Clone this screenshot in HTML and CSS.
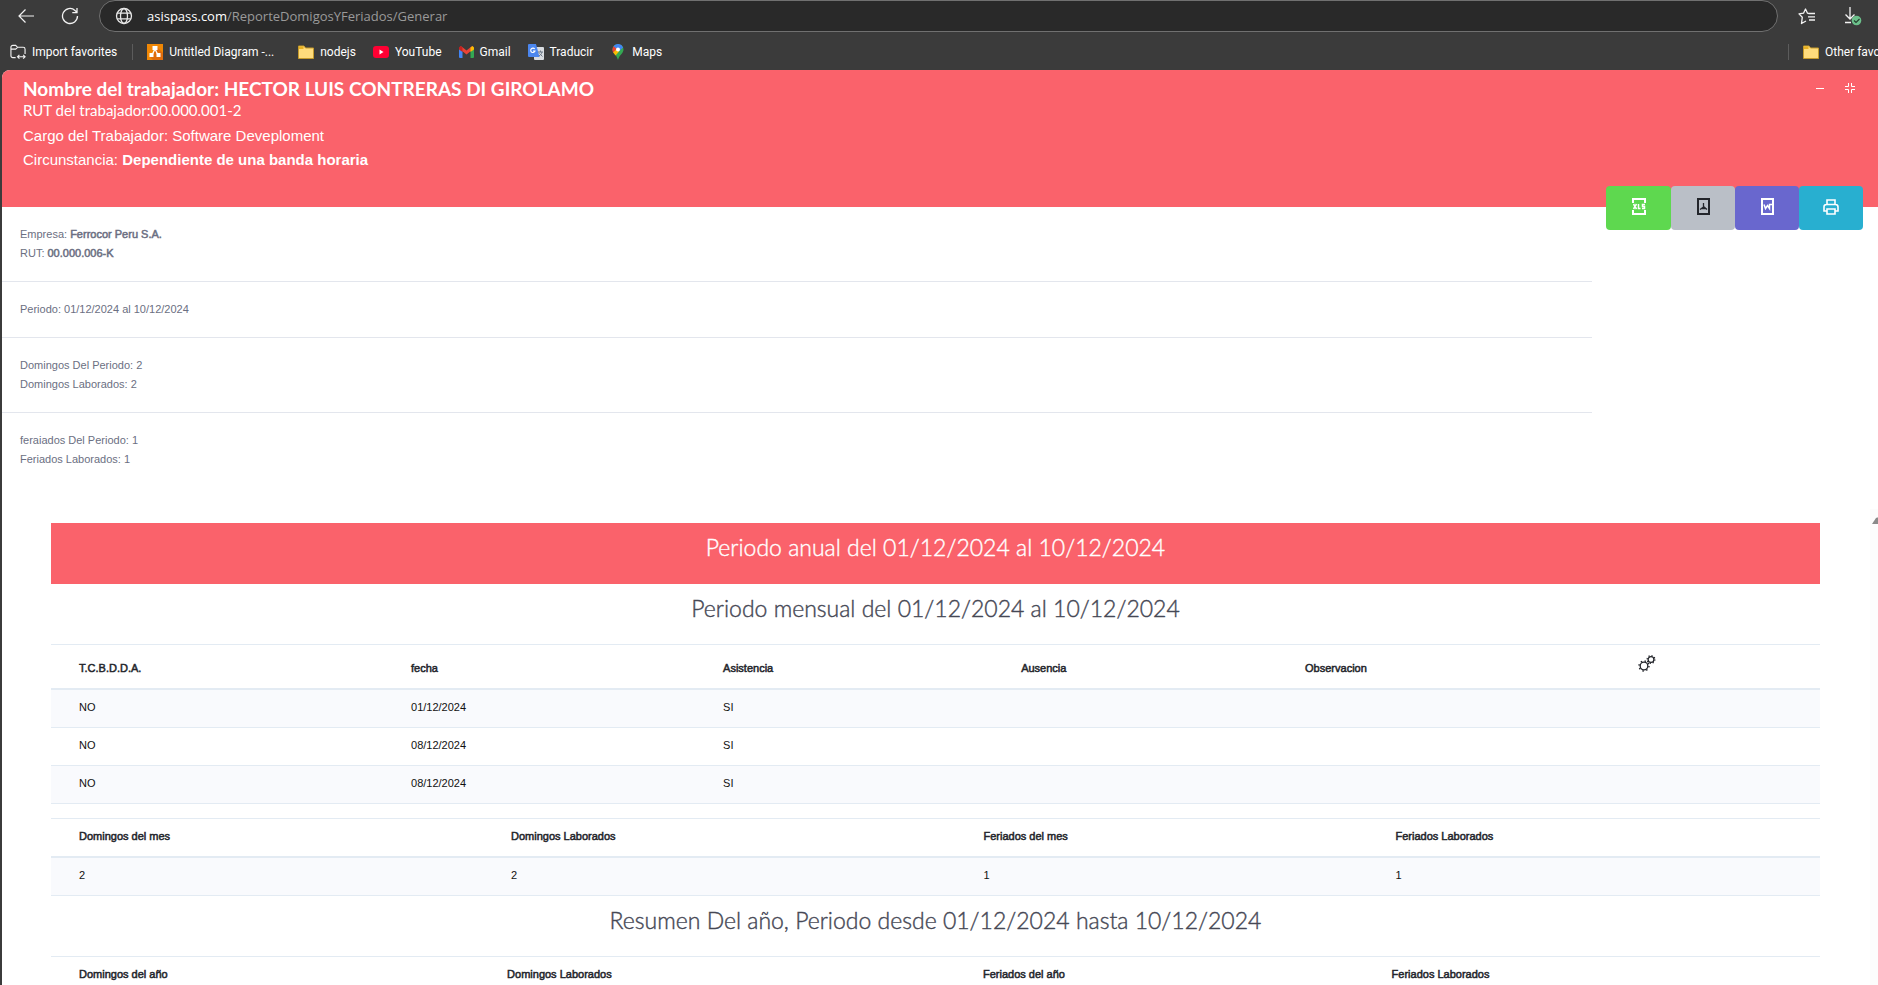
FILE: index.html
```html
<!DOCTYPE html>
<html lang="es">
<head>
<meta charset="utf-8">
<title>Reporte Domingos y Feriados</title>
<link rel="stylesheet" href="styles.css">
</head>
<body>
<div class="browser">
  <div class="toolbar">
    <button class="nav-btn" aria-label="Atrás"><svg width="18" height="16" viewBox="0 0 18 16"><path d="M17 8H2M8.500 1.500 2 8l6.500 6.500" fill="none" stroke="#f2f2f2" stroke-width="1.200"/></svg></button>
    <button class="nav-btn" aria-label="Recargar"><svg width="18" height="18" viewBox="0 0 18 18"><path d="M16.500 9A7.500 7.500 0 1 1 14 3.400L16 5.500M16 1v4.700h-4.700" fill="none" stroke="#f2f2f2" stroke-width="1.300"/></svg></button>
    <div class="address">
      <svg width="18" height="18" viewBox="0 0 18 18" fill="none" stroke="#e8e8e8" stroke-width="1.300"><circle cx="9" cy="9" r="7.500"/><ellipse cx="9" cy="9" rx="3.500" ry="7.500"/><path d="M2.200 6.200h13.600M2.200 11.800h13.600"/></svg>
      <span class="url"><span class="host">asispass.com</span>/ReporteDomigosYFeriados/Generar</span>
    </div>
    <div class="tools">
      <button class="nav-btn" aria-label="Favoritos"><svg width="18" height="17" viewBox="0 0 18 17" fill="none" stroke="#f2f2f2" stroke-width="1.300" stroke-linejoin="round"><path d="M11 5.500 9.500 5.200 7.500 1 5.500 5.200 1 5.900 4.300 9.200 3.500 15.500 8 13"/><path d="M11 5.500h6M10 8.800h7M11 12h6"/></svg></button>
      <button class="nav-btn" aria-label="Descargas"><svg width="18" height="20" viewBox="0 0 18 20"><path d="M6 1v12M1.500 8.500 6 13l4.500-4.500M1 16.500h6" fill="none" stroke="#f2f2f2" stroke-width="1.300"/><circle cx="12.500" cy="14.500" r="4.800" fill="#6cc08b"/><path d="m10 14.500 2 2 3.500-3.500" fill="none" stroke="#26402f" stroke-width="1.200"/></svg></button>
    </div>
  </div>
  <nav class="bookmarks">
    <a class="bm bm-import" href="#"><svg width="16" height="16" viewBox="0 0 17 16" fill="none" stroke="#f2f2f2" stroke-width="1.200"><path d="M6 14H3a2 2 0 0 1-2-2V3a2 2 0 0 1 2-2h3l2 2h6a2 2 0 0 1 2 2v5M1 5h5l2-2"/><path d="M8 13h8M10 11l-2 2 2 2M14 11l2 2-2 2"/></svg>Import favorites</a>
    <span class="sep"></span>
    <a class="bm bm-diagram" href="#"><svg width="16" height="16" viewBox="0 0 16 16"><path fill="#f08705" d="M0 0h16v16H0z"/><path fill="#df6c0c" d="m10 3 6 6v7H6l-3-3z"/><path d="M8 5 5 11M8 5l3 6" stroke="#fff" stroke-width="1.300"/><path fill="#fff" d="M5.500 2h5v4h-5zM2.500 9h4v4h-4zM9.500 9h4v4h-4z"/></svg>Untitled Diagram -...</a>
    <a class="bm" href="#"><svg width="16" height="14" viewBox="0 0 16 14"><path d="M.5 1h5.500l1.500 2h8v10.500H.5z" fill="#ffdc7c" stroke="#c59a2b"/><path d="M1 1.500h4.500v2.500H1z" fill="#e8b020"/></svg>nodejs</a>
    <a class="bm" href="#"><svg width="16" height="12" viewBox="0 0 16 12"><rect width="16" height="12" rx="3" fill="#f03"/><path d="m6.500 3.500 4 2.500-4 2.500z" fill="#fff"/></svg>YouTube</a>
    <a class="bm" href="#"><svg width="15" height="12" viewBox="0 0 15 12"><path fill="#4285f4" d="M0 2h3.500v10H1a1 1 0 0 1-1-1z"/><path fill="#34a853" d="M11.500 2H15v9a1 1 0 0 1-1 1h-2.500z"/><path fill="#ea4335" d="M1 .5h1.500l5 4 5-4H14v2.800L7.500 8.500 1 3.300z"/><path fill="#fbbc04" d="M11.500 1.500 13.500 0 15 1.500V3.500l-3.500 2.500z"/><path fill="#c5221f" d="M0 3.500v-2L1.500 0l2 1.500v4.500z"/></svg>Gmail</a>
    <a class="bm" href="#"><svg width="16" height="16" viewBox="0 0 16 16"><rect x="6" y="3" width="10" height="13" rx="1" fill="#d9dce0"/><path d="M1 0h7l3.500 13H1a1 1 0 0 1-1-1V1a1 1 0 0 1 1-1z" fill="#4b86ee"/><path d="M6.700 5A2.200 2.200 0 1 0 7 7H5" fill="none" stroke="#fff" stroke-width="1.100"/><path d="M10 8h5M12.500 6.500V8M14 8c-.5 2-1.500 3-3 4M11.500 9.500l3 3" fill="none" stroke="#6b7785"/></svg>Traducir</a>
    <a class="bm" href="#"><svg width="16" height="16" viewBox="0 0 16 16"><path d="M8 0a5.500 5.500 0 0 1 5.500 5.500C13.500 9.500 9.500 10.500 8 16c-1.500-5.500-5.500-6.500-5.500-10.500A5.500 5.500 0 0 1 8 0z" fill="#34a853"/><path d="M3.500 2.300A5.500 5.500 0 0 1 13.100 3.500L8 8z" fill="#4285f4"/><path d="M3.600 2.200 7 5 3.500 9a6 6 0 0 1 .1-6.800z" fill="#ea4335"/><path d="M3.200 8.500 7 4.500 9 7.500 5.600 11.500z" fill="#fbbc04"/><circle cx="8" cy="5.500" r="2" fill="#fff"/></svg>Maps</a>
    <span class="sep sep-end"></span>
    <a class="bm bm-other" href="#"><svg width="16" height="14" viewBox="0 0 16 14"><path d="M.5 1h5.500l1.500 2h8v10.500H.5z" fill="#ffdc7c" stroke="#c59a2b"/><path d="M1 1.500h4.500v2.500H1z" fill="#e8b020"/></svg>Other favorites</a>
  </nav>
</div>

<main class="page">
  <header class="card-head">
    <div class="worker">
      <h1>Nombre del trabajador: HECTOR LUIS CONTRERAS DI GIROLAMO</h1>
      <h2>RUT del trabajador:00.000.001-2</h2>
      <p>Cargo del Trabajador: Software Deveploment</p>
      <p>Circunstancia: <b>Dependiente de una banda horaria</b></p>
    </div>
    <div class="card-tools">
      <button aria-label="Minimizar"><svg width="10" height="10" viewBox="0 0 10 10"><path d="M1 5.500h8" stroke="#fff"/></svg></button>
      <button aria-label="Contraer"><svg width="10" height="10" viewBox="0 0 10 10"><path d="M0 3.500h3.500V0M6.500 0v3.500H10M0 6.500h3.500V10M6.500 10V6.500H10" fill="none" stroke="#fff"/></svg></button>
    </div>
  </header>

  <div class="summary">
    <div class="info">
      <section><p>Empresa: <b>Ferrocor Peru S.A.</b></p><p>RUT: <b>00.000.006-K</b></p></section>
      <section><p>Periodo: 01/12/2024 al 10/12/2024</p></section>
      <section><p>Domingos Del Periodo: 2</p><p>Domingos Laborados: 2</p></section>
      <section><p>feraiados Del Periodo: 1</p><p>Feriados Laborados: 1</p></section>
    </div>
    <div class="exports">
      <button class="xls" aria-label="Excel"><svg width="14" height="17" viewBox="0 0 14 17"><path d="M1 5V1h12v4M1 12v4h12v-4" fill="none" stroke="#fff" stroke-width="2"/><path d="m1.500 6 3 5M4.500 6l-3 5M6.500 6v4.500h2M13 6.500h-2.500v2h2v2H10" fill="none" stroke="#fff" stroke-width="1.500"/></svg></button>
      <button class="pdf" aria-label="PDF"><svg width="13" height="17" viewBox="0 0 13 17"><path d="M1 1h11v15H1z" fill="none" stroke="#23252b" stroke-width="2"/><path d="M6.500 5v4L3 11.500M6.500 8.500 10 11.500M4.500 10.500H9" fill="none" stroke="#23252b" stroke-width="1.300"/></svg></button>
      <button class="doc" aria-label="Word"><svg width="13" height="17" viewBox="0 0 13 17"><path d="M1 1h11v15H1z" fill="none" stroke="#fff" stroke-width="2"/><path d="M3 6.500 4.500 10.500 6.500 7.500 8.500 10.500V6.500H11" fill="none" stroke="#fff" stroke-width="1.500"/></svg></button>
      <button class="print" aria-label="Imprimir"><svg width="16" height="16" viewBox="0 0 16 16" fill="none" stroke="#fff" stroke-width="1.600"><path d="M4 5V1h8v4M4 12H1V8a2.500 2.500 0 0 1 2.500-2.500h9A2.500 2.500 0 0 1 15 8v4h-3M4 10h8v5H4z"/></svg></button>
    </div>
  </div>

  <div class="report">
    <h3 class="banner">Periodo anual del 01/12/2024 al 10/12/2024</h3>
    <h3 class="title">Periodo mensual del 01/12/2024 al 10/12/2024</h3>
    <table class="days">
      <colgroup><col class="d1"><col class="d2"><col class="d3"><col class="d4"><col class="d5"><col></colgroup>
      <thead><tr><th>T.C.B.D.D.A.</th><th>fecha</th><th>Asistencia</th><th>Ausencia</th><th>Observacion</th><th class="gear"><svg width="18" height="17" viewBox="0 0 18 17" fill="none" stroke="#23252b"><circle cx="6" cy="11" r="3.800" stroke-width="1.300"/><circle cx="6" cy="11" r="5" stroke-width="1.400" stroke-dasharray="1.400 2.527"/><circle cx="13" cy="4.500" r="2.900" stroke-width="1.300"/><circle cx="13" cy="4.500" r="3.900" stroke-width="1.200" stroke-dasharray="1.200 1.863"/></svg></th></tr></thead>
      <tbody>
        <tr><td>NO</td><td>01/12/2024</td><td>SI</td><td></td><td></td><td></td></tr>
        <tr><td>NO</td><td>08/12/2024</td><td>SI</td><td></td><td></td><td></td></tr>
        <tr><td>NO</td><td>08/12/2024</td><td>SI</td><td></td><td></td><td></td></tr>
      </tbody>
    </table>
    <table class="month">
      <colgroup><col class="m1"><col class="m2"><col class="m3"><col></colgroup>
      <thead><tr><th>Domingos del mes</th><th>Domingos Laborados</th><th>Feriados del mes</th><th>Feriados Laborados</th></tr></thead>
      <tbody><tr><td>2</td><td>2</td><td>1</td><td>1</td></tr></tbody>
    </table>
    <h3 class="title">Resumen Del año, Periodo desde 01/12/2024 hasta 10/12/2024</h3>
    <table class="year">
      <colgroup><col class="y1"><col class="y2"><col class="y3"><col></colgroup>
      <thead><tr><th>Domingos del año</th><th>Domingos Laborados</th><th>Feriados del año</th><th>Feriados Laborados</th></tr></thead>
    </table>
  </div>
  <div class="scroll"><svg width="12" height="7" viewBox="0 0 12 7"><path d="M0 7 4 1q1-1 3 0l5 6z" fill="#8a8a8a"/></svg></div>
</main>
</body>
</html>
```
FILE: styles.css
```css
* { box-sizing: border-box; }
body {
  margin: 0;
  height: 100vh;
  overflow: hidden;
  background: #3b3b3b;
  font-family: "Liberation Sans", Arial, sans-serif;
  font-size: 11px;
}
h1, h2, h3, p { margin: 0; }
button { padding: 0; border: 0; background: none; }
svg { display: block; flex: none; }

.browser { color: #fff; }
.toolbar { display: flex; align-items: center; height: 32px; padding-left: 17px; }
.nav-btn { display: flex; flex: none; margin-right: 26px; }
.nav-btn + .nav-btn { margin-right: 20px; }
.address {
  flex: 1;
  display: flex;
  align-items: center;
  gap: 14px;
  height: 32px;
  padding-left: 15px;
  border: 1px solid #707070;
  border-radius: 16px;
  background: #292929;
}
.url { font: 13px "Open Sans", "Noto Sans", sans-serif; color: #9a9a9a; }
.host { color: #fff; }
.tools { display: flex; align-items: center; padding-left: 20px; margin-right: -12px; }
.tools .nav-btn { margin-right: 28px; }
.bookmarks { display: flex; align-items: center; height: 38px; padding: 2px 0 0 10px; overflow: hidden; }
.bm {
  display: flex;
  align-items: center;
  flex: none;
  gap: 6px;
  margin-right: 17px;
  font: 12px Roboto, "Open Sans", sans-serif;
  color: #fff;
  text-decoration: none;
  white-space: nowrap;
}
.bm-diagram { margin-right: 24px; }
.sep { flex: none; width: 1px; height: 16px; margin-right: 14px; background: #5c5c5c; }
.bm-import + .sep { margin-left: -2px; }
.sep-end { margin-left: auto; }
.bm-other { width: 75px; margin-right: 0; }

.page { position: relative; height: calc(100vh - 70px); margin-left: 2px; overflow: hidden; background: #fff; border-top-left-radius: 8px; }
.card-head {
  display: flex;
  justify-content: space-between;
  min-height: 137px;
  padding: 8px 23px 0 21px;
  background: #fa626b;
  color: #fff;
}
.worker h1 { font: 700 19px/22px Lato, sans-serif; }
.worker h2 { font: 400 15px/20px Lato, sans-serif; margin-bottom: 4px; }
.worker p { font-size: 15px; line-height: 24px; }
.card-tools { display: flex; gap: 20px; height: 20px; align-items: center; }

.summary { display: flex; align-items: flex-start; gap: 14px; padding-right: 15px; }
.info { flex: 1; color: #6b6f82; }
.info section { padding: 18px; border-bottom: 1px solid #e3e6ed; }
.info section:last-child { border-bottom: 0; }
.info p { line-height: 19px; }
/* Medium emphasis drawn on the regular face, keeping its narrow letters */
.info b, th { font-weight: 400; -webkit-text-stroke: 0.5px currentColor; }
.exports { display: flex; margin-top: -21px; }
.exports button {
  display: flex;
  align-items: center;
  justify-content: center;
  width: 64px;
  height: 44px;
  border-radius: 4px;
  padding-bottom: 3px;
}
.exports .xls { width: 65px; background: #5ed84f; }
.pdf { background: #babfc7; }
.doc { background: #6967ce; }
.print { background: #28afd0; }

.report { margin: 36px 58px 0 49px; color: #23252b; }
.banner, .title { font: 300 23px/29px Lato, sans-serif; text-align: center; -webkit-text-stroke: 0.4px currentColor; }
.banner { padding: 10px 0 22px; background: #fa626b; color: #fff; }
.title { padding: 10px 0 21px; color: #464855; }
table { width: 100%; border-collapse: separate; border-spacing: 0; table-layout: fixed; }
th, td { height: 38px; padding: 0 28px 3px; border-top: 1px solid #e3ebf3; text-align: left; line-height: 16px; }
th { border-bottom: 2px solid #e3ebf3; height: 40px; }
.days th { height: 46px; padding: 2px 28px 0; }
td { color: #111; }
tbody tr:first-child td { border-top: 0; }
tbody tr:nth-child(odd) { background: #f9fafd; }
tbody tr:last-child td { border-bottom: 1px solid #e3ebf3; }
.days tbody tr:first-child td { height: 37px; }
.days tbody tr:last-child td { height: 39px; }
.days { margin-bottom: 14px; }
.gear svg { margin-bottom: 8px; }
.d1 { width: 18.77%; } .d2 { width: 17.64%; } .d3 { width: 16.85%; } .d4 { width: 16.05%; } .d5 { width: 18.8%; }
.m1 { width: 24.42%; } .m2 { width: 26.71%; } .m3 { width: 23.29%; }
.y1 { width: 24.2%; } .y2 { width: 26.9%; } .y3 { width: 23.1%; }

.scroll { position: absolute; top: 439px; right: 0; bottom: 0; width: 8px; padding: 8px 0 0 2px; overflow: hidden; background: #fcfcfc; }
```
